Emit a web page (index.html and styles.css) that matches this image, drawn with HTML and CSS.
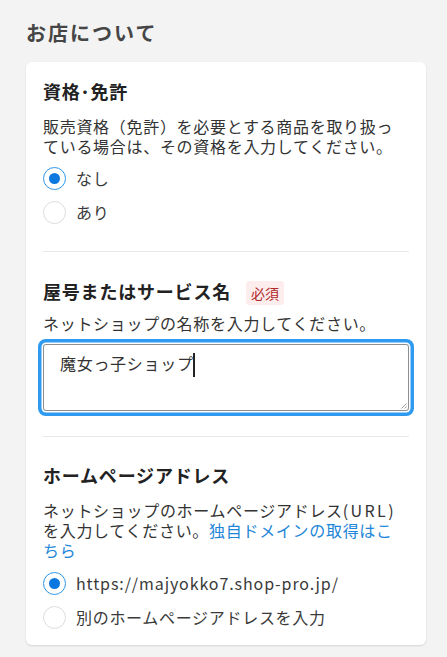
FILE: index.html
```html
<!DOCTYPE html>
<html lang="ja">
<head>
<meta charset="utf-8">
<title>お店について</title>
<link rel="stylesheet" href="styles.css">
</head>
<body>
<main class="page">
  <h1 class="page-title">お店について</h1>
  <div class="card">
    <section class="section section-first">
      <h2 class="section-heading">資格･免許</h2>
      <p class="desc">販売資格（免許）を必要とする商品を取り扱っている場合は、その資格を入力してください。</p>
      <div class="radio-group">
        <label class="radio-row"><span class="radio radio-checked"></span><span class="radio-label">なし</span></label>
        <label class="radio-row"><span class="radio"></span><span class="radio-label">あり</span></label>
      </div>
    </section>
    <section class="section section-middle">
      <div class="heading-row">
        <h2 class="section-heading">屋号またはサービス名</h2>
        <span class="badge">必須</span>
      </div>
      <p class="desc">ネットショップの名称を入力してください。</p>
      <div class="textbox" role="textbox">魔女っ子ショップ<span class="caret"></span>
        <svg class="grip" width="7" height="7" viewBox="0 0 7 7"><path d="M6.5 1.5 L1.5 6.5 M6.5 4.5 L4.5 6.5" stroke="#9a9a9a" stroke-width="1"/></svg>
      </div>
    </section>
    <section class="section section-last">
      <h2 class="section-heading">ホームページアドレス</h2>
      <p class="desc">ネットショップのホームページアドレス<span class="latin">(URL)</span>を入力してください。<a class="link" href="#">独自ドメインの取得はこちら</a></p>
      <div class="radio-group radio-group-wide">
        <label class="radio-row"><span class="radio radio-checked"></span><span class="radio-label radio-label-latin">https://majyokko7.shop-pro.jp/</span></label>
        <label class="radio-row"><span class="radio"></span><span class="radio-label">別のホームページアドレスを入力</span></label>
      </div>
    </section>
  </div>
</main>
</body>
</html>
```

FILE: styles.css
```css
* { box-sizing: border-box; }

body {
  margin: 0;
  background: #f3f3f3;
  font-family: "Noto Sans CJK JP", "Noto Sans", sans-serif;
  color: #333;
}

.page {
  padding: 19px 21px 11px 26px;
}

.page-title {
  margin: 0 0 15px;
  font-size: 20px;
  line-height: 28px;
  font-weight: 700;
  letter-spacing: 2px;
  color: #454545;
}

.card {
  background: #fff;
  border-radius: 6px;
  box-shadow: 0 1px 2px rgba(0, 0, 0, 0.13);
  padding: 0 17px;
}

.section {
  border-top: 1px solid #e9e9e9;
  padding: 26px 0 22px;
}

.section-first {
  border-top: none;
  padding-top: 17px;
}

.section-middle {
  padding-bottom: 25px;
}

.section-last {
  padding-bottom: 11px;
}

.section-heading {
  margin: 0 0 13px;
  font-size: 18px;
  line-height: 24px;
  font-weight: 700;
  letter-spacing: 0.8px;
  color: #222;
}

.heading-row {
  display: flex;
  align-items: center;
  height: 26px;
  margin-bottom: 9px;
}

.heading-row .section-heading {
  margin: 0;
}

.badge {
  margin-left: 15px;
  margin-top: 4px;
  height: 24px;
  padding: 0 5px;
  display: inline-flex;
  align-items: center;
  background: #fdeeed;
  color: #b0282a;
  font-size: 14px;
  border-radius: 3px;
}

.desc {
  margin: 0;
  font-size: 16px;
  line-height: 20px;
  letter-spacing: 0.7px;
  color: #333;
}

.latin {
  letter-spacing: 2.4px;
}

.link {
  color: #1d86d8;
  text-decoration: none;
}

.radio-group {
  margin-top: 5px;
}

.radio-group-wide {
  margin-top: 6px;
}

.radio-row {
  display: flex;
  align-items: center;
  height: 34px;
}

.radio {
  width: 23px;
  height: 23px;
  border-radius: 50%;
  border: 1.5px solid #dcdcdc;
  background: #fff;
  display: flex;
  align-items: center;
  justify-content: center;
  flex-shrink: 0;
}

.radio-checked {
  border: 1.5px solid #2d96ea;
}

.radio-checked::after {
  content: "";
  width: 11px;
  height: 11px;
  border-radius: 50%;
  background: #0a78de;
}

.radio-label {
  margin-left: 10px;
  font-size: 16px;
  letter-spacing: 0.7px;
  color: #3a3a3a;
}

.radio-label-latin {
  letter-spacing: 0.9px;
}

.textbox {
  position: relative;
  margin-top: 11px;
  height: 67px;
  border: 1px solid #8e8e8e;
  border-radius: 3px;
  padding: 7px 16px;
  font-size: 16px;
  line-height: 22px;
  letter-spacing: 0.7px;
  color: #333;
  box-shadow: 0 0 0 1.5px #fff, 0 0 0 5px #2e9af0;
}

.caret {
  display: inline-block;
  width: 2px;
  height: 24px;
  background: #222;
  vertical-align: -7px;
  margin-left: -1px;
}

.grip {
  position: absolute;
  right: 1px;
  bottom: 1px;
}
```
